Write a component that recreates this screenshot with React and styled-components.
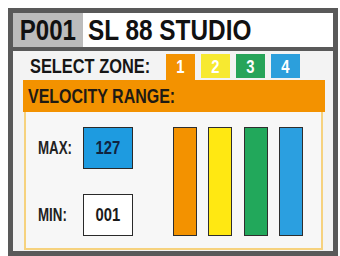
import React from 'react';
import styled, { createGlobalStyle } from 'styled-components';

const GlobalStyle = createGlobalStyle`
  html, body {
    margin: 0;
    padding: 0;
    background: #ffffff;
  }
  body {
    font-family: "Liberation Sans", Arial, sans-serif;
  }
`;

// condensed bold look, the narrow face is not installed
const Narrow = styled.span`
  display: inline-block;
  white-space: nowrap;
  transform: scaleX(${p => p.$x || 0.78});
  transform-origin: ${p => (p.$center ? 'center' : 'left')} center;
`;

const Frame = styled.div`
  box-sizing: border-box;
  margin: 8px 2px 0 8px;
  width: 330px;
  height: 248px;
  border: 5px solid #595959;
  background: #f3f3f3;
  display: flex;
  flex-direction: column;
`;

const Header = styled.div`
  display: flex;
  height: 34px;
  border-bottom: 4px solid #595959;
  font-weight: 700;
  font-size: 29px;
  color: #111;
`;

const PresetNo = styled.div`
  width: 70px;
  background: #bcbcbc;
  display: flex;
  align-items: center;
  justify-content: center;
`;

const Title = styled.div`
  flex: 1;
  background: #ffffff;
  padding-left: 5px;
  display: flex;
  align-items: center;
  overflow: hidden;
`;

const ZoneRow = styled.div`
  display: flex;
  align-items: flex-start;
  margin-top: 3px;
  height: 26px;
  padding-left: 17px;
`;

const ZoneLabel = styled.div`
  width: 136px;
  height: 24px;
  display: flex;
  align-items: center;
  font-weight: 700;
  font-size: 21px;
  color: #161616;
  overflow: hidden;
`;

const Tabs = styled.div`
  display: flex;
  gap: 6px;
`;

const Tab = styled.div`
  width: 29px;
  height: ${p => (p.$active ? '26px' : '24px')};
  background: ${p => p.$color};
  color: #ffffff;
  font-weight: 700;
  font-size: 19px;
  display: flex;
  justify-content: center;
  padding-top: 2px;
  box-sizing: border-box;
`;

const Panel = styled.div`
  margin: 0 8px 0 10px;
  display: flex;
  flex-direction: column;
`;

const PanelHead = styled.div`
  height: 32px;
  background: #f39200;
  display: flex;
  align-items: center;
  padding-left: 5px;
  font-weight: 700;
  font-size: 20.5px;
  color: #1e1a14;
  overflow: hidden;
`;

const PanelBody = styled.div`
  box-sizing: border-box;
  height: 138px;
  margin: 0 2px 0 1px;
  border: 2px solid #f6d27e;
  border-top: none;
  background: #f7f7f7;
  display: flex;
  padding: 15px 0 0 12px;
`;

const Fields = styled.div`
  display: flex;
  flex-direction: column;
  gap: 25px;
`;

const Field = styled.div`
  display: flex;
  align-items: center;
`;

const FieldLabel = styled.div`
  width: 45px;
  font-weight: 700;
  font-size: 17.5px;
  color: #222;
  overflow: hidden;
`;

const ValueBox = styled.div`
  box-sizing: border-box;
  width: 50px;
  height: 42px;
  border: 1px solid #2a2a2a;
  background: ${p => p.$bg};
  display: flex;
  align-items: center;
  justify-content: center;
  font-weight: 700;
  font-size: 19px;
  color: ${p => p.$fg};
`;

const Bars = styled.div`
  display: flex;
  gap: 11.3px;
  margin-left: 40px;
`;

const Bar = styled.div`
  box-sizing: border-box;
  width: 24px;
  height: 109px;
  border: 1px solid #2e2e2e;
  background: ${p => p.$color};
`;

const zones = [
  { n: 1, tab: '#f39200', bar: '#f39200' },
  { n: 2, tab: '#f7e930', bar: '#ffe812' },
  { n: 3, tab: '#27a459', bar: '#22a85b' },
  { n: 4, tab: '#2c9fdc', bar: '#2b9fe0' },
];

export default function App() {
  return (
    <>
      <GlobalStyle />
      <Frame>
        <Header>
          <PresetNo><Narrow $center $x={0.83}>P001</Narrow></PresetNo>
          <Title><Narrow $x={0.84}>SL 88 STUDIO</Narrow></Title>
        </Header>
        <ZoneRow>
          <ZoneLabel><Narrow $x={0.78}>SELECT ZONE:</Narrow></ZoneLabel>
          <Tabs>
            {zones.map(z => (
              <Tab key={z.n} $color={z.tab} $active={z.n === 1}>
                <Narrow $center>{z.n}</Narrow>
              </Tab>
            ))}
          </Tabs>
        </ZoneRow>
        <Panel>
          <PanelHead><Narrow $x={0.78}>VELOCITY RANGE:</Narrow></PanelHead>
          <PanelBody>
            <Fields>
              <Field>
                <FieldLabel><Narrow $x={0.76}>MAX:</Narrow></FieldLabel>
                <ValueBox $bg="#1e9be0" $fg="#10233f"><Narrow $center>127</Narrow></ValueBox>
              </Field>
              <Field>
                <FieldLabel><Narrow $x={0.76}>MIN:</Narrow></FieldLabel>
                <ValueBox $bg="#ffffff" $fg="#1a1a1a"><Narrow $center>001</Narrow></ValueBox>
              </Field>
            </Fields>
            <Bars>
              {zones.map(z => (
                <Bar key={z.n} $color={z.bar} />
              ))}
            </Bars>
          </PanelBody>
        </Panel>
      </Frame>
    </>
  );
}
